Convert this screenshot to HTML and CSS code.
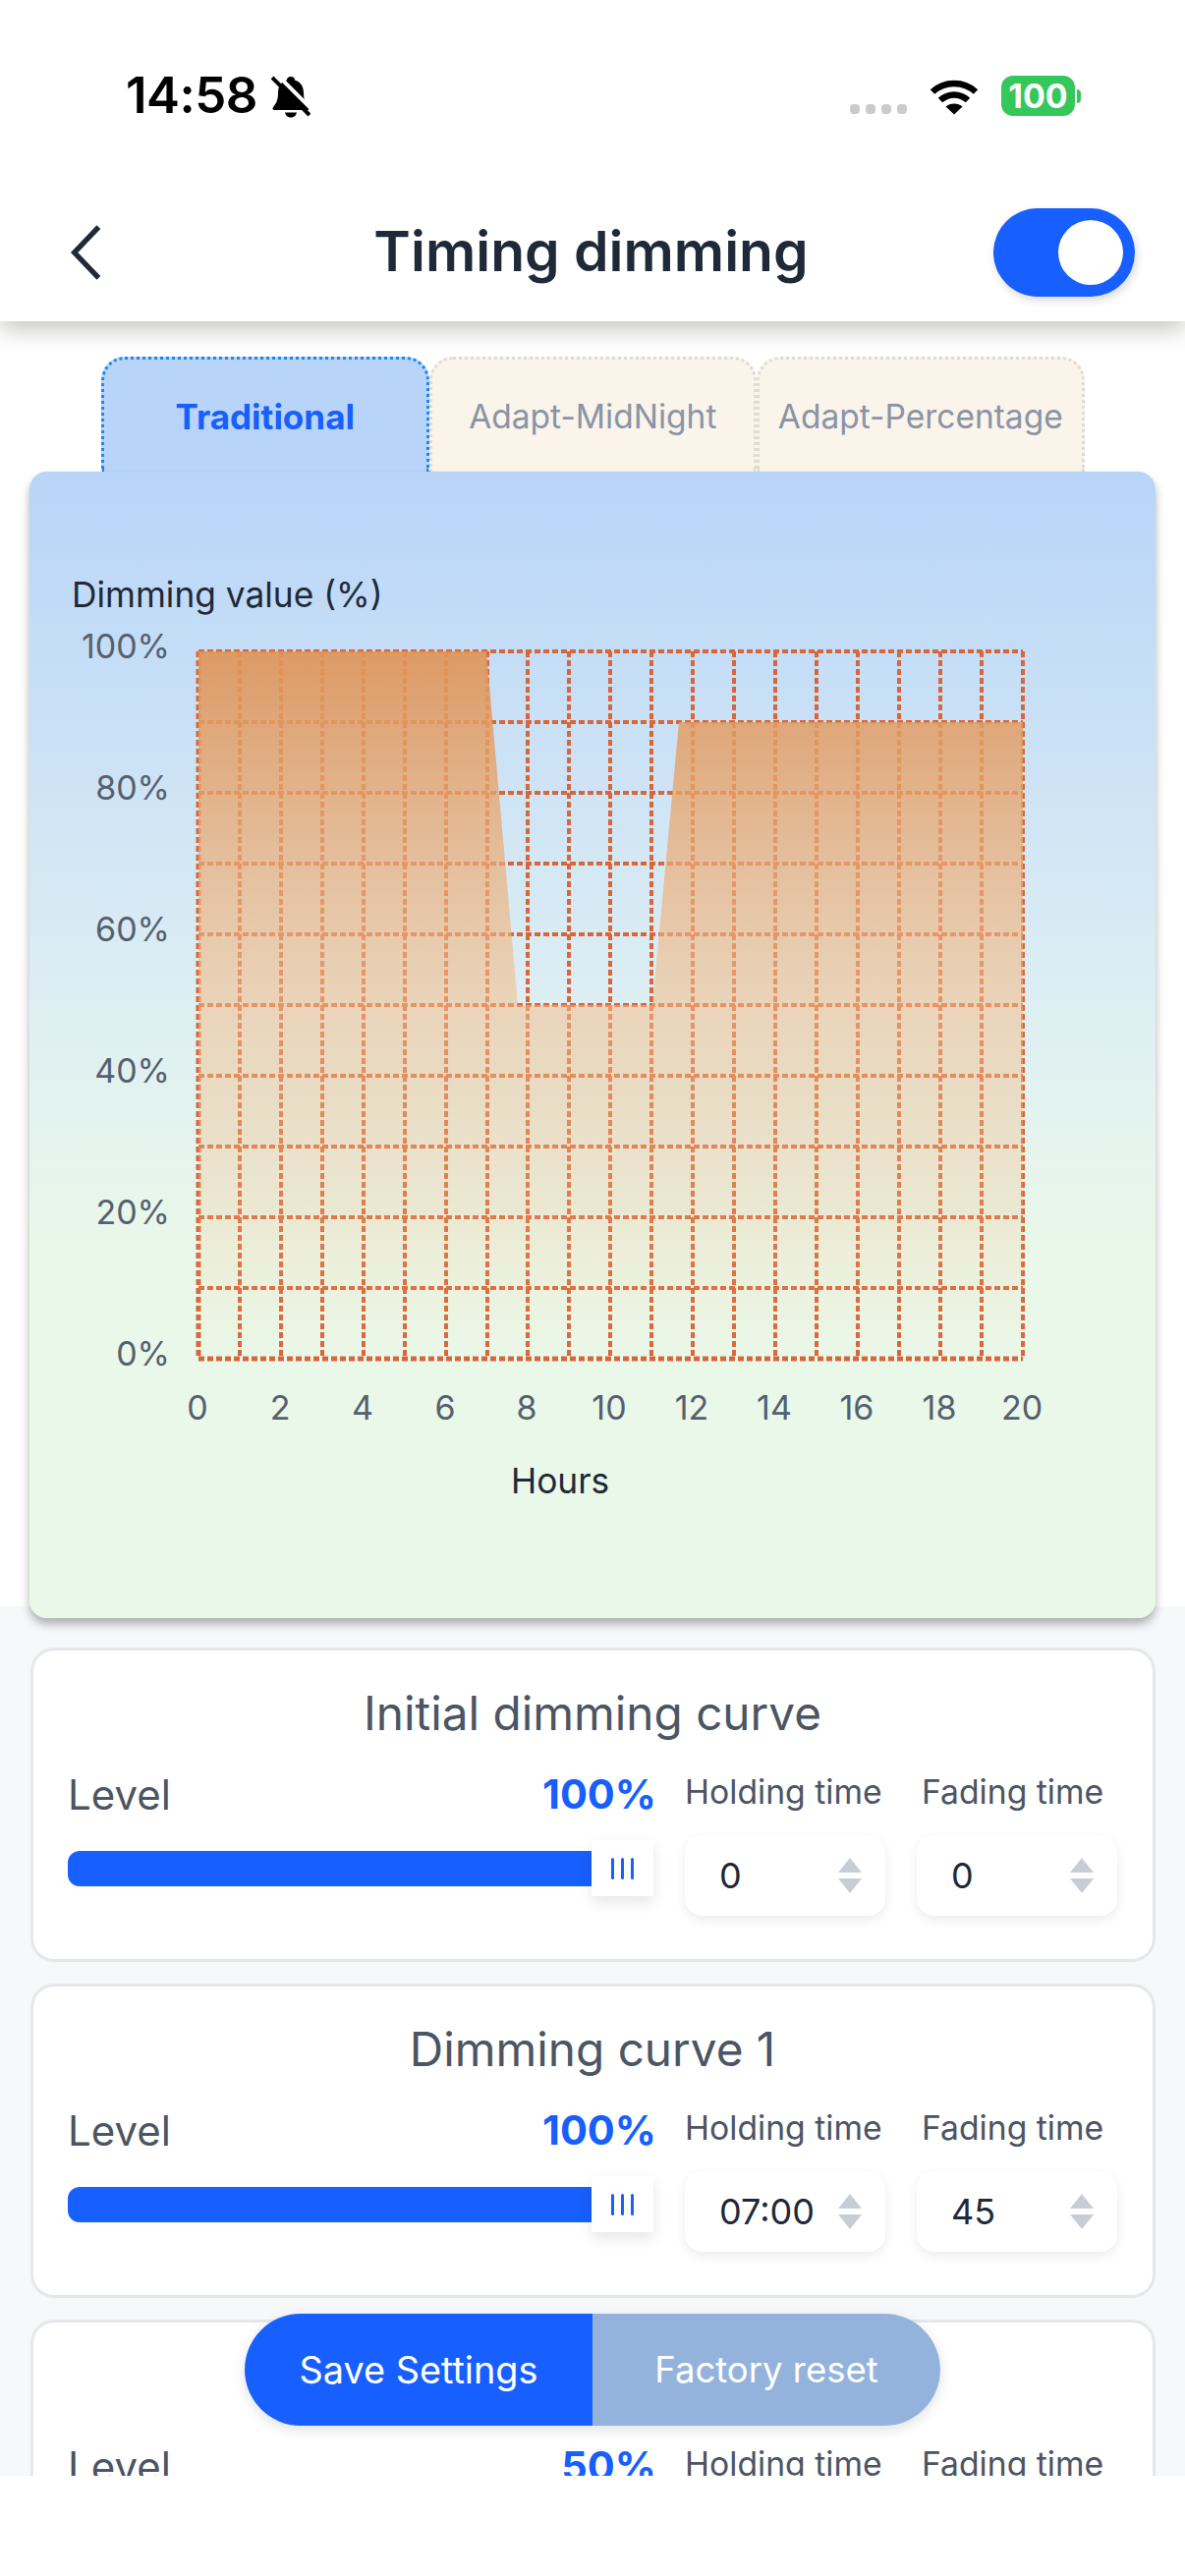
FILE: index.html
```html
<!DOCTYPE html>
<html lang="en">
  <head>
    <meta charset="UTF-8" />
    <meta name="viewport" content="width=device-width, initial-scale=1.0" />
    <title>Timing dimming</title>
    <link rel="stylesheet" href="styles.css">
  </head>
  <body>
    <div class="screen">
      <header class="top">
        <div class="status">
          <div class="status-left">
            <span class="clock">14:58</span>
            <svg class="bell" viewBox="0 0 40 43">
              <path d="M20 1c2.500 0 4 1.700 4.300 3.700 6 1.700 8.700 6.700 8.700 13 0 5 1 8.500 3 11.500 1 1.500 2.500 3 2.500 4.300 0 1-.8 1.500-2 1.500H3.500c-1.200 0-2-.5-2-1.500 0-1.300 1.500-2.800 2.500-4.300 2-3 3-6.500 3-11.500 0-6.300 2.700-11.300 8.700-13C16 2.700 17.500 1 20 1zM14 37.500h12c-.5 3-3 5-6 5s-5.500-2-6-5z" />
              <path class="bell-gap" d="M0 -1L42 41" />
              <path class="bell-slash" d="M1 2L39 40" />
            </svg>
          </div>
          <div class="status-right">
            <div class="signal"><i></i><i></i><i></i><i></i></div>
            <svg class="wifi" viewBox="0 0 50 38">
              <path class="wifi-arc" d="M3 14.500C15 3 35 3 47 14.500" />
              <path class="wifi-arc" d="M11 23C19 15.500 31 15.500 39 23" />
              <path d="M25 37.500L16.500 29.500C21 25.500 29 25.500 33.500 29.500z" />
            </svg>
            <div class="battery"><span class="battery-level">100</span><i class="battery-nub"></i></div>
          </div>
        </div>
        <div class="navbar">
          <svg class="back" viewBox="0 0 30 54">
            <path d="M27 3L4 27L27 51" />
          </svg>
          <h1 class="page-title">Timing dimming</h1>
          <div class="toggle"><span class="toggle-knob"></span></div>
        </div>
      </header>

      <main class="content">
        <section class="chart-section">
          <div class="tabs">
            <div class="tab tab-active">Traditional</div>
            <div class="tab">Adapt-MidNight</div>
            <div class="tab">Adapt-Percentage</div>
          </div>
          <div class="chart-panel">
            <svg class="chart" viewBox="30 480 1146 1167">
              <defs>
                <linearGradient id="areaFill" x1="0" y1="0" x2="0" y2="1">
                  <stop offset="0" stop-color="#df9458" stop-opacity="0.92" />
                  <stop offset="0.5" stop-color="#f4bd89" stop-opacity="0.54" />
                  <stop offset="0.7" stop-color="#f4be89" stop-opacity="0.35" />
                  <stop offset="1" stop-color="#f4be89" stop-opacity="0" />
                </linearGradient>
              </defs>
              <text class="axis-name" x="73" y="618">Dimming value (%)</text>
              <g class="y-labels">
                <text x="173" y="670">100%</text>
                <text x="173" y="814">80%</text>
                <text x="173" y="958">60%</text>
                <text x="173" y="1102">40%</text>
                <text x="173" y="1246">20%</text>
                <text x="173" y="1390">0%</text>
              </g>
              <path class="grid" d="M202 663H1041M202 735H1041M202 807H1041M202 879H1041M202 951H1041M202 1023H1041M202 1095H1041M202 1167H1041M202 1239H1041M202 1311H1041" />
              <path class="grid" d="M244 663V1383M286 663V1383M328 663V1383M370 663V1383M412 663V1383M454 663V1383M496 663V1383M537 663V1383M579 663V1383M621 663V1383M663 663V1383M705 663V1383M747 663V1383M789 663V1383M831 663V1383M873 663V1383M915 663V1383M957 663V1383M999 663V1383M1041 663V1383" />
              <path class="grid grid-axis" d="M202 663V1383M202 1383H1041" />
              <polygon points="202,1383 202,663 495,663 527,1023 664,1023 691,735 1041,735 1041,1383" fill="url(#areaFill)" />
              <g class="x-labels">
                <text x="201" y="1445">0</text>
                <text x="285" y="1445">2</text>
                <text x="369" y="1445">4</text>
                <text x="453" y="1445">6</text>
                <text x="536" y="1445">8</text>
                <text x="620" y="1445">10</text>
                <text x="704" y="1445">12</text>
                <text x="788" y="1445">14</text>
                <text x="872" y="1445">16</text>
                <text x="956" y="1445">18</text>
                <text x="1040" y="1445">20</text>
              </g>
              <text class="axis-name axis-hours" x="570" y="1520">Hours</text>
            </svg>
          </div>
        </section>

        <section class="curves">
          <div class="curve-card">
            <h2 class="curve-title">Initial dimming curve</h2>
            <div class="curve-grid">
              <div class="level-head"><span>Level</span><b class="level-value">100%</b></div>
              <div class="field-label">Holding time</div>
              <div class="field-label field-label-fade">Fading time</div>
              <div class="slider">
                <div class="slider-track"></div>
                <div class="slider-handle"><i></i><i></i><i></i></div>
              </div>
              <div class="number-input"><span>0</span><div class="stepper"><i class="step-up"></i><i class="step-down"></i></div></div>
              <div class="number-input"><span>0</span><div class="stepper"><i class="step-up"></i><i class="step-down"></i></div></div>
            </div>
          </div>

          <div class="curve-card">
            <h2 class="curve-title">Dimming curve 1</h2>
            <div class="curve-grid">
              <div class="level-head"><span>Level</span><b class="level-value">100%</b></div>
              <div class="field-label">Holding time</div>
              <div class="field-label field-label-fade">Fading time</div>
              <div class="slider">
                <div class="slider-track"></div>
                <div class="slider-handle"><i></i><i></i><i></i></div>
              </div>
              <div class="number-input"><span>07:00</span><div class="stepper"><i class="step-up"></i><i class="step-down"></i></div></div>
              <div class="number-input"><span>45</span><div class="stepper"><i class="step-up"></i><i class="step-down"></i></div></div>
            </div>
          </div>

          <div class="curve-card">
            <h2 class="curve-title">Dimming curve 2</h2>
            <div class="curve-grid">
              <div class="level-head"><span>Level</span><b class="level-value">50%</b></div>
              <div class="field-label">Holding time</div>
              <div class="field-label field-label-fade">Fading time</div>
            </div>
          </div>
        </section>

        <div class="actions">
          <button class="action-btn action-save" type="button">Save Settings</button>
          <button class="action-btn action-reset" type="button">Factory reset</button>
        </div>
      </main>
      <div class="home-area"></div>
    </div>
  </body>
</html>
```

FILE: styles.css
```css
* {
  box-sizing: border-box;
}

html,
body {
  margin: 0;
  background-color: #fff;
}

body {
  font-family: Inter, "Liberation Sans", sans-serif;
  color: #1f2937;
}

.screen {
  display: flex;
  flex-direction: column;
  width: 1206px;
  height: 2622px;
  overflow: hidden;
}

/* status bar + title bar */
.top {
  position: relative;
  z-index: 2;
  height: 327px;
  flex-shrink: 0;
  background-color: #fff;
  box-shadow: 0 8px 22px rgba(60, 60, 50, 0.3);
}

.status {
  display: flex;
  justify-content: space-between;
  height: 212px;
  padding: 70px 106px 0 128px;
}

.status-left {
  display: flex;
  align-items: flex-start;
  gap: 14px;
}

.clock {
  font-size: 51px;
  font-weight: 600;
  line-height: 54px;
  color: #000;
  letter-spacing: -0.5px;
}

.bell {
  width: 40px;
  height: 43px;
  margin-top: 7px;
}

.bell-gap {
  fill: none;
  stroke: #fff;
  stroke-width: 4;
  transform: translate(3px, -3px);
}

.bell-slash {
  fill: none;
  stroke: #000;
  stroke-width: 4;
}

.status-right {
  display: flex;
  align-items: flex-start;
}

.signal {
  display: flex;
  gap: 6px;
  margin-top: 36px;
  margin-right: 23px;
}

.signal i {
  width: 10px;
  height: 10px;
  border-radius: 4px;
  background-color: #cbcbcb;
}

.wifi {
  width: 50px;
  height: 38px;
  margin-top: 9px;
  margin-right: 23px;
}

.wifi-arc {
  fill: none;
  stroke: #000;
  stroke-width: 6.5;
}

.battery {
  display: flex;
  align-items: center;
  gap: 2px;
  margin-top: 7px;
}

.battery-level {
  width: 75px;
  height: 41px;
  border-radius: 12px;
  background-color: #34c759;
  color: #fff;
  font-size: 34px;
  font-weight: 700;
  line-height: 41px;
  text-align: center;
}

.battery-nub {
  width: 4px;
  height: 14px;
  border-radius: 0 7px 7px 0;
  background-color: #34c759;
}

.navbar {
  display: grid;
  grid-template-columns: 1fr auto 1fr;
  align-items: center;
  height: 90px;
  padding: 0 51px 0 48px;
}

.back {
  width: 33px;
  height: 58px;
  margin-left: 23px;
  fill: none;
  stroke: #1f2937;
  stroke-width: 5;
}

.page-title {
  margin: 0 0 2px;
  font-size: 57px;
  font-weight: 600;
  line-height: 70px;
}

.toggle {
  display: flex;
  justify-content: flex-end;
  align-items: center;
  justify-self: end;
  width: 144px;
  height: 90px;
  padding-right: 12px;
  border-radius: 45px;
  background-color: #175ffe;
  box-shadow: 2px 4px 8px rgba(0, 0, 0, 0.15);
}

.toggle-knob {
  width: 66px;
  height: 66px;
  border-radius: 50%;
  background-color: #fff;
}

/* everything under the title bar, cut at the home area */
.content {
  position: relative;
  height: 2193px;
  flex-shrink: 0;
  overflow: hidden;
  background-color: #f7f8fa;
}

.chart-section {
  height: 1308px;
  padding-top: 36px;
  background-color: #fff;
}

.tabs {
  display: flex;
  padding-left: 103px;
}

.tab {
  width: 333.5px;
  height: 117px;
  border: 3px dotted #dfdcd2;
  border-bottom: none;
  border-radius: 24px 24px 0 0;
  background-color: #faf4ea;
  color: #8a94a6;
  font-size: 33.5px;
  line-height: 116px;
  text-align: center;
}

.tab-active {
  border-color: #1e88f0;
  background-color: #b8d4f8;
  color: #175ffe;
  font-size: 35px;
  font-weight: 700;
}

.chart-panel {
  position: relative;
  width: 1146px;
  height: 1167px;
  margin-left: 30px;
  border-radius: 18px;
  background: linear-gradient(180deg, #b8d4f8 0%, #deeff3 47%, #eaf8e9 68%);
  box-shadow: 0 6px 10px rgba(0, 0, 0, 0.3);
}

.chart {
  display: block;
  width: 1146px;
  height: 1167px;
}

.chart text {
  font-family: Inter, "Liberation Sans", sans-serif;
  font-size: 34px;
}

.chart .axis-name {
  fill: #1f2937;
  font-size: 35.3px;
}

.axis-hours {
  text-anchor: middle;
}

.y-labels text {
  fill: #55606f;
  text-anchor: end;
}

.x-labels text {
  fill: #55606f;
  text-anchor: middle;
}

.grid {
  fill: none;
  stroke: #d9663a;
  stroke-width: 4;
  stroke-dasharray: 6 3;
}

.grid-axis {
  stroke-width: 5;
}

/* curve cards */
.curves {
  display: flex;
  flex-direction: column;
  gap: 22px;
  padding: 42px 30px 0 31px;
}

.curve-card {
  flex-shrink: 0;
  height: 320px;
  padding: 34px 36px 0 35px;
  border: 3px solid #e5e7eb;
  border-radius: 24px;
  background-color: #fff;
}

.curve-title {
  margin: 0;
  font-size: 47.7px;
  font-weight: 400;
  line-height: 60px;
  text-align: center;
  color: #4b5563;
}

.curve-grid {
  display: grid;
  grid-template-columns: 596px 204px 204px;
  grid-template-rows: 60px 82px;
  column-gap: 32px;
  row-gap: 12px;
  margin-top: 22px;
}

.level-head {
  display: flex;
  justify-content: space-between;
  align-items: center;
  font-size: 42px;
  color: #4b5563;
}

.level-value {
  margin-right: -3px;
  font-size: 41.5px;
  font-weight: 700;
  color: #175ffe;
}

.field-label {
  font-size: 33.7px;
  line-height: 56px;
  color: #4b5563;
  white-space: nowrap;
}

.field-label-fade {
  margin-left: 5px;
}

.slider {
  display: flex;
  align-items: center;
  height: 57px;
  margin-top: 5px;
}

.slider-track {
  flex: 1;
  height: 36px;
  border-radius: 12px 0 0 12px;
  background-color: #175ffe;
}

.slider-handle {
  display: flex;
  justify-content: center;
  gap: 7px;
  width: 63px;
  height: 57px;
  padding-top: 18px;
  background-color: #fff;
  box-shadow: 0 6px 14px rgba(0, 0, 0, 0.1);
}

.slider-handle i {
  width: 3px;
  height: 22px;
  border-radius: 2px;
  background-color: #175ffe;
}

.number-input {
  display: flex;
  justify-content: space-between;
  align-items: center;
  height: 82px;
  padding: 0 24px 0 35px;
  border-radius: 18px;
  background-color: #fff;
  box-shadow: 0 4px 12px rgba(0, 0, 0, 0.08);
  font-size: 36px;
  color: #1f2937;
}

.stepper {
  display: flex;
  flex-direction: column;
  gap: 6px;
}

.step-up {
  border-left: 12px solid transparent;
  border-right: 12px solid transparent;
  border-bottom: 15px solid #c8cdd5;
}

.step-down {
  border-left: 12px solid transparent;
  border-right: 12px solid transparent;
  border-top: 15px solid #c8cdd5;
}

/* floats over the cards */
.actions {
  position: absolute;
  left: 249px;
  top: 2028px;
  z-index: 1;
  display: flex;
  width: 708px;
  height: 114px;
  border-radius: 57px;
  overflow: hidden;
  box-shadow: 0 4px 14px rgba(0, 0, 0, 0.12);
}

.action-btn {
  flex: 1;
  padding: 0;
  border: none;
  color: #fff;
  font-family: inherit;
}

.action-save {
  flex: 0 0 354px;
  background-color: #175ffe;
  font-size: 37.8px;
}

.action-reset {
  background-color: #94b3dc;
  font-size: 36.5px;
}

.home-area {
  flex: 1;
  background-color: #fff;
}
```
